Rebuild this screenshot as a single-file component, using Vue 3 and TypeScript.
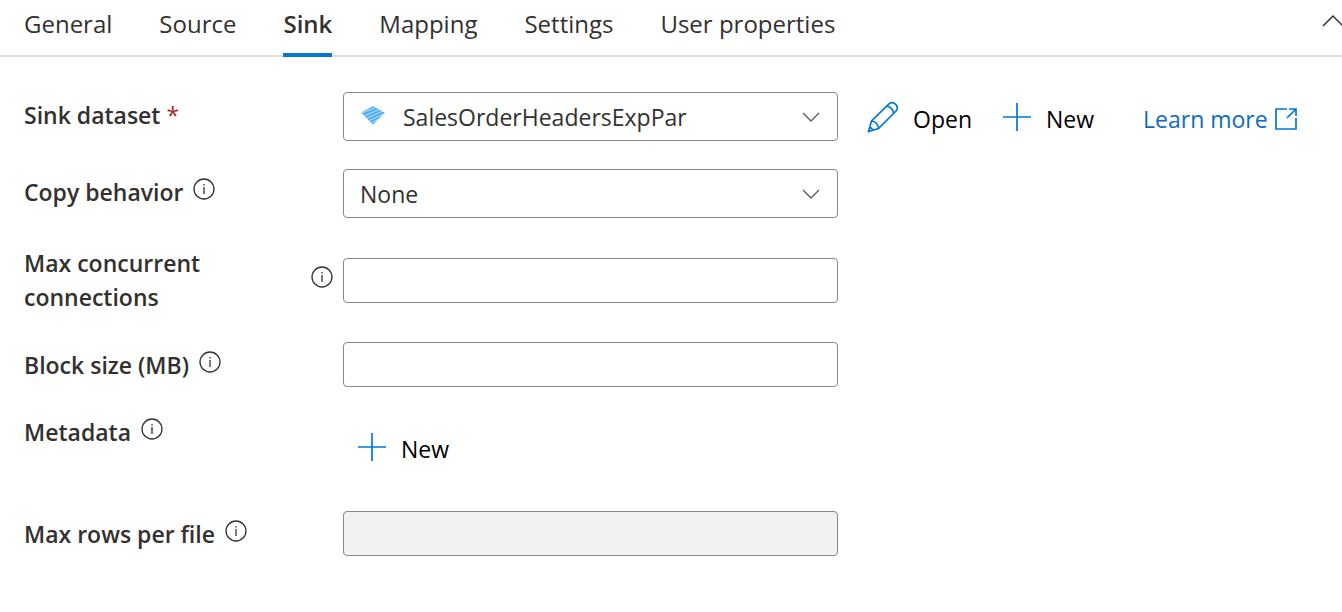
<script setup lang="ts">
import { ref } from 'vue'

const tabs: string[] = ['General', 'Source', 'Sink', 'Mapping', 'Settings', 'User properties']
const activeTab = ref('Sink')
const dataset = ref('SalesOrderHeadersExpPar')
const copyBehavior = ref('None')
const maxConnections = ref('')
const blockSize = ref('')
</script>

<template>
  <main class="panel">
    <header class="tabbar">
      <nav class="tabs" role="tablist" aria-label="Activity settings">
        <button
          v-for="tab in tabs"
          :key="tab"
          type="button"
          role="tab"
          class="tab"
          :class="{ active: tab === activeTab }"
          :aria-selected="tab === activeTab"
          @click="activeTab = tab"
        >{{ tab }}</button>
      </nav>
      <button type="button" class="collapse" aria-label="Collapse">
        <svg width="22" height="14" viewBox="0 0 22 14"><path d="M1 12 L11 2 L21 12" /></svg>
      </button>
    </header>

    <form class="form" @submit.prevent>
      <div class="row">
        <div class="caption raised">
          <label for="dataset">Sink dataset <span class="required">*</span></label>
        </div>
        <div class="field">
          <svg class="dataset-icon" width="26" height="22" viewBox="0 0 26 22">
            <defs>
              <clipPath id="sheet"><path d="M13 1 L25 7.5 L13 20 L1 7.5 Z" /></clipPath>
            </defs>
            <g clip-path="url(#sheet)">
              <path class="sheet" d="M13 1 L25 7.5 L13 20 L1 7.5 Z" />
              <path class="gap" d="M2 8 L17 2 M4 11 L20 4 M6 13.5 L23 6 M8 16 L26 8 M10 18.5 L26 10.5" />
            </g>
          </svg>
          <select id="dataset" v-model="dataset" class="box select with-icon">
            <option>SalesOrderHeadersExpPar</option>
          </select>
          <svg class="chevron" width="18" height="11" viewBox="0 0 18 11"><path d="M1 1 L9 9 L17 1" /></svg>
        </div>
        <div class="actions">
          <button type="button" class="command">
            <svg class="blue" width="32" height="32" viewBox="0 0 32 32">
              <path d="M1.5 30.5 L4.5 20 L22 2.8 C26.5 -.8 33 5.5 29 10 L11.5 27.5 Z" />
              <path d="M4.5 20 C8 20 11.5 23.5 11.5 27.5 M19.5 5.2 C23 5.4 26.4 8.5 26.6 12.2 M2.6 26.6 C4.5 26.7 5.4 27.8 5.5 29.3" />
            </svg>
            <span>Open</span>
          </button>
          <button type="button" class="command">
            <svg class="blue" width="30" height="30" viewBox="0 0 30 30"><path d="M15 1 V29 M1 15 H29" /></svg>
            <span>New</span>
          </button>
          <a class="learn" href="#">
            <span>Learn more</span>
            <svg class="blue" width="24" height="24" viewBox="0 0 24 24">
              <path d="M13 2 H2 V22 H22 V11 M15 2 H22 V9 M22 2 L13 11" />
            </svg>
          </a>
        </div>
      </div>

      <div class="row">
        <div class="caption raised">
          <label for="behavior">Copy behavior</label>
          <svg class="info" width="22" height="22" viewBox="0 0 22 22"><circle cx="11" cy="11" r="10" /><path d="M11 9 V16 M11 6 V7.5" /></svg>
        </div>
        <div class="field">
          <select id="behavior" v-model="copyBehavior" class="box select">
            <option>None</option>
          </select>
          <svg class="chevron" width="18" height="11" viewBox="0 0 18 11"><path d="M1 1 L9 9 L17 1" /></svg>
        </div>
      </div>

      <div class="row">
        <div class="caption">
          <label class="wide" for="connections">Max concurrent connections</label>
          <svg class="info" width="22" height="22" viewBox="0 0 22 22"><circle cx="11" cy="11" r="10" /><path d="M11 9 V16 M11 6 V7.5" /></svg>
        </div>
        <div class="field"><input id="connections" v-model="maxConnections" class="box" type="text"></div>
      </div>

      <div class="row">
        <div class="caption">
          <label for="block">Block size (MB)</label>
          <svg class="info" width="22" height="22" viewBox="0 0 22 22"><circle cx="11" cy="11" r="10" /><path d="M11 9 V16 M11 6 V7.5" /></svg>
        </div>
        <div class="field"><input id="block" v-model="blockSize" class="box" type="text"></div>
      </div>

      <div class="row metadata">
        <div class="caption">
          <span id="metadata">Metadata</span>
          <svg class="info" width="22" height="22" viewBox="0 0 22 22"><circle cx="11" cy="11" r="10" /><path d="M11 9 V16 M11 6 V7.5" /></svg>
        </div>
        <div class="field inset">
          <button type="button" class="command" aria-describedby="metadata">
            <svg class="blue" width="30" height="30" viewBox="0 0 30 30"><path d="M15 1 V29 M1 15 H29" /></svg>
            <span>New</span>
          </button>
        </div>
      </div>

      <div class="row">
        <div class="caption">
          <label for="rows">Max rows per file</label>
          <svg class="info" width="22" height="22" viewBox="0 0 22 22"><circle cx="11" cy="11" r="10" /><path d="M11 9 V16 M11 6 V7.5" /></svg>
        </div>
        <div class="field"><input id="rows" class="box" type="text" disabled></div>
      </div>
    </form>
  </main>
</template>

<style>
body {
  margin: 0;
  background: #fff;
}
</style>

<style scoped>
.panel {
  overflow: hidden;
  font-family: 'Open Sans', 'Noto Sans', sans-serif;
  font-size: 23px;
  line-height: 34px;
  color: #323130;
}
button,
select,
input {
  font: inherit;
  color: inherit;
}
button {
  padding: 0;
  border: 0;
  background: none;
  cursor: pointer;
}
svg {
  flex: none;
  fill: none;
}
.tabbar {
  display: flex;
  justify-content: space-between;
  height: 55px;
  padding-left: 24px;
  border-bottom: 2px solid #e1dfdd;
}
.tabs {
  display: flex;
  gap: 47px;
}
.tab {
  height: 57px;
  padding-bottom: 5px;
  border-bottom: 4px solid transparent;
  font-size: 24px;
  white-space: nowrap;
}
.tab.active {
  border-bottom-color: #0078d4;
  font-weight: 600;
}
.collapse {
  display: flex;
  align-items: center;
  height: 42px;
  margin-right: -2px;
}
.collapse path {
  stroke: #323130;
  stroke-width: 1.5;
}
.form {
  display: flex;
  flex-direction: column;
  gap: 28px;
  padding: 35px 24px;
}
.row {
  display: grid;
  grid-template-columns: 319px minmax(200px, 495px) auto;
  justify-content: start;
  align-items: center;
}
.caption {
  display: flex;
  align-items: center;
  gap: 10px;
  padding-right: 10px;
  font-weight: 600;
}
.raised {
  padding-bottom: 4px;
}
.wide {
  flex: 1;
  padding-right: 60px;
}
.required {
  color: #a4262c;
  font-weight: 400;
}
.info {
  margin-bottom: 6px;
}
.info circle {
  stroke: #323130;
  stroke-width: 1.3;
}
.info path {
  stroke: #323130;
  stroke-width: 1.3;
}
.field {
  position: relative;
  display: flex;
}
.box {
  box-sizing: border-box;
  width: 100%;
  height: 45px;
  padding: 0 16px;
  border: 1px solid #8a8886;
  border-radius: 4px;
  background: #fff;
  outline: none;
}
.box:disabled {
  background: #f3f2f1;
}
.select {
  height: 49px;
  appearance: none;
}
.with-icon {
  padding-left: 59px;
}
.dataset-icon {
  position: absolute;
  left: 17px;
  top: 13px;
  pointer-events: none;
}
.sheet {
  fill: #50aef5;
}
.gap {
  stroke: #d3ebfd;
  stroke-width: 0.8;
}
.chevron {
  position: absolute;
  right: 18px;
  top: 20px;
  pointer-events: none;
}
.chevron path {
  stroke: #605e5c;
  stroke-width: 1.4;
}
.actions {
  display: flex;
  align-items: center;
  gap: 30px;
  padding-top: 4px;
  padding-left: 29px;
}
.command {
  display: flex;
  align-items: center;
  gap: 14px;
  color: #000;
  white-space: nowrap;
}
.command svg {
  margin-bottom: 4px;
}
.blue {
  stroke: #0078d4;
  stroke-width: 1.7;
}
.learn {
  display: flex;
  align-items: center;
  gap: 6px;
  margin-left: 19px;
  color: #0f6cbd;
  text-decoration: none;
  white-space: nowrap;
}
.metadata {
  min-height: 68px;
}
.metadata .caption {
  align-self: start;
}
.inset {
  padding-left: 14px;
}
</style>
